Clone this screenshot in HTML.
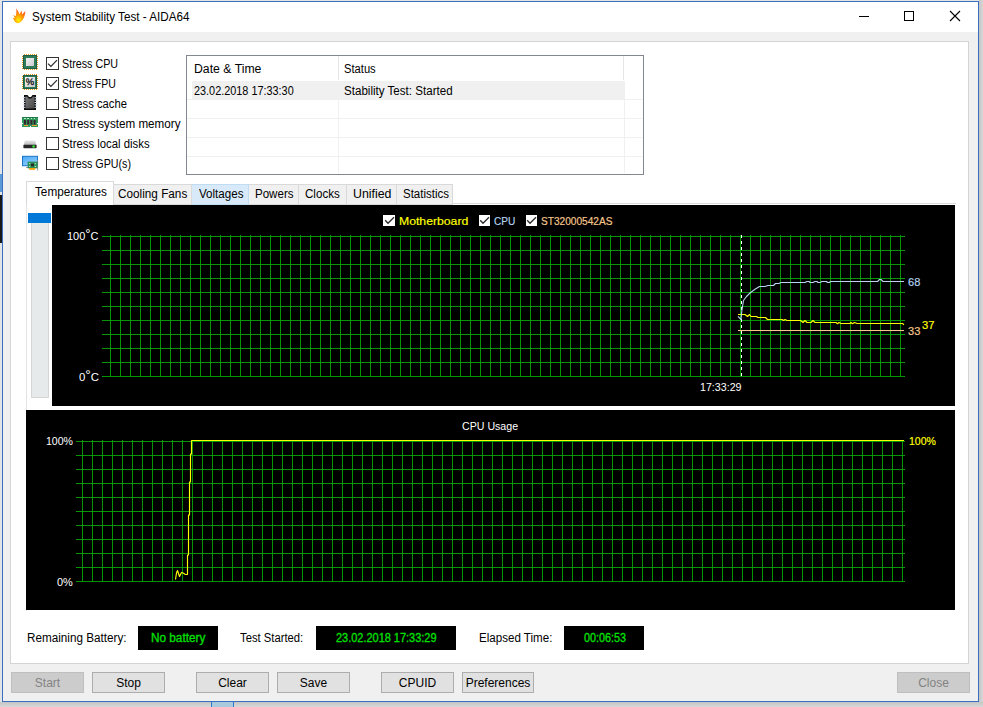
<!DOCTYPE html>
<html><head><meta charset="utf-8"><title>System Stability Test - AIDA64</title>
<style>
html,body{margin:0;padding:0;}
body{width:983px;height:707px;overflow:hidden;position:relative;background:#d6d6d6;font-family:"Liberation Sans",sans-serif;font-size:12px;color:#000;}
.a{position:absolute;}
.t{position:absolute;white-space:nowrap;line-height:14px;height:14px;transform-origin:0 0;}
#win{left:2px;top:1px;width:975px;height:699px;border:1px solid #3a6fbe;background:#f0f0f0;}
#title{left:3px;top:2px;width:975px;height:30px;background:#fff;}
#panel{left:10px;top:41px;width:957px;height:621px;border:1px solid #d4d4d4;background:#fff;}
.cb{position:absolute;width:11px;height:11px;border:1px solid #333;background:#fff;}
.btn{position:absolute;top:672px;height:19px;border:1px solid #adadad;background:#e1e1e1;text-align:center;line-height:21px;}
.btn.dis{background:#cccccc;border-color:#bfbfbf;color:#838383;}
.tab{position:absolute;top:184px;height:19px;border:1px solid #d9d9d9;border-left:none;background:#f0f0f0;}
.blk{position:absolute;background:#000;}
.dg{font-size:14px;vertical-align:1.5px;line-height:0;}
.g{color:#00e000;-webkit-text-stroke:0.3px #00e000;}
.c{font-size:11.6px;-webkit-text-stroke:0.18px currentColor;}
.w{-webkit-text-stroke:0;}
</style></head><body>
<!-- background bits behind the window -->
<div class="a" style="left:0;top:0;width:983px;height:1px;background:#e4e4e4"></div>
<div class="a" style="left:0;top:0;width:2px;height:707px;background:#e2e4e8"></div>
<div class="a" style="left:0;top:174px;width:2px;height:18px;background:#5a9ad8"></div>
<div class="a" style="left:0;top:195px;width:2px;height:48px;background:#181818"></div>
<div class="a" style="left:979px;top:0;width:4px;height:707px;background:linear-gradient(90deg,#c4c4c4,#d8d8d8)"></div>
<div class="a" style="left:0;top:702px;width:983px;height:5px;background:linear-gradient(180deg,#c4c4c4,#d8d8d8)"></div>
<div class="a" style="left:211px;top:702px;width:21px;height:5px;background:#a9c9dc;border-left:1px solid #2b7bd0;border-right:1px solid #2b7bd0"></div>

<div id="win" class="a"></div>
<div id="title" class="a"></div>
<!-- flame icon -->
<svg class="a" style="left:12px;top:7px" width="15" height="17" viewBox="0 0 15 17">
<defs><radialGradient id="fl" cx="45%" cy="80%" r="75%"><stop offset="0" stop-color="#fff200"/><stop offset="0.35" stop-color="#ffb000"/><stop offset="0.7" stop-color="#ff7a10"/><stop offset="1" stop-color="#f05a18"/></radialGradient></defs>
<path d="M4.2 1.2 C5.6 3.2 6.8 5.2 7.6 7.2 C8.2 6 8.8 4.8 9.6 3.6 C9.6 5 10 6.2 10.4 7.2 C11.4 6.2 12.4 5 13.4 4 C13.2 7 12.6 9.6 11.2 12 C10 14.2 8 16 5.6 16.2 C3.8 16 2.4 14.6 2 13 C1.8 12.2 1.4 11.6 0.8 11 C1.6 11 2.2 10.8 2.8 10.4 C2.2 9.6 1.6 9 0.8 8.6 C2 8.4 3 8.6 3.8 9 C4.4 6.4 4.6 3.8 4.2 1.2Z" fill="url(#fl)"/>
</svg>
<div class="t" id="ttl" style="left:32.1px;top:10px;transform:scaleX(0.9732)">System Stability Test - AIDA64</div>
<!-- window controls -->
<svg class="a" style="left:850px;top:2px" width="128" height="30" viewBox="0 0 128 30" shape-rendering="crispEdges">
<path d="M9 14.5H19" stroke="#000" stroke-width="1"/>
<rect x="54.5" y="9.5" width="9" height="9" fill="none" stroke="#000" stroke-width="1"/>
<path d="M100 9L110 19M110 9L100 19" stroke="#000" stroke-width="1.1" shape-rendering="auto"/>
</svg>

<div id="panel" class="a"></div>

<!-- stress icons -->
<svg width="0" height="0" style="position:absolute"><defs>
<linearGradient id="gsq" x1="0" y1="0" x2="1" y2="1"><stop offset="0" stop-color="#f4f4f4"/><stop offset="0.6" stop-color="#dcdcdc"/><stop offset="1" stop-color="#c4c4c4"/></linearGradient>
<linearGradient id="gchip" x1="0" y1="0" x2="1" y2="1"><stop offset="0" stop-color="#7a7a7a"/><stop offset="1" stop-color="#484848"/></linearGradient>
<linearGradient id="gmon" x1="0" y1="0" x2="0.6" y2="1"><stop offset="0" stop-color="#4aa6f2"/><stop offset="1" stop-color="#8fd0ff"/></linearGradient>
<linearGradient id="ghd" x1="0" y1="0" x2="0" y2="1"><stop offset="0" stop-color="#e6e6e6"/><stop offset="1" stop-color="#b8b8b8"/></linearGradient>
</defs></svg><svg class="a" style="left:22px;top:54px" width="16" height="16" viewBox="0 0 16 16" shape-rendering="crispEdges"><g fill="#e39a1c"><rect x="2" y="0" width="1" height="1"/><rect x="2" y="15" width="1" height="1"/><rect x="0" y="2" width="1" height="1"/><rect x="15" y="2" width="1" height="1"/><rect x="4" y="0" width="1" height="1"/><rect x="4" y="15" width="1" height="1"/><rect x="0" y="4" width="1" height="1"/><rect x="15" y="4" width="1" height="1"/><rect x="6" y="0" width="1" height="1"/><rect x="6" y="15" width="1" height="1"/><rect x="0" y="6" width="1" height="1"/><rect x="15" y="6" width="1" height="1"/><rect x="8" y="0" width="1" height="1"/><rect x="8" y="15" width="1" height="1"/><rect x="0" y="8" width="1" height="1"/><rect x="15" y="8" width="1" height="1"/><rect x="10" y="0" width="1" height="1"/><rect x="10" y="15" width="1" height="1"/><rect x="0" y="10" width="1" height="1"/><rect x="15" y="10" width="1" height="1"/><rect x="12" y="0" width="1" height="1"/><rect x="12" y="15" width="1" height="1"/><rect x="0" y="12" width="1" height="1"/><rect x="15" y="12" width="1" height="1"/><rect x="14" y="0" width="1" height="1"/><rect x="14" y="15" width="1" height="1"/><rect x="0" y="14" width="1" height="1"/><rect x="15" y="14" width="1" height="1"/></g>
<rect x="1" y="1" width="14" height="14" fill="#2f7a58"/><rect x="1.5" y="1.5" width="13" height="13" fill="none" stroke="#1f5e44" stroke-width="1"/>
<rect x="4" y="4" width="8" height="8" fill="url(#gsq)"/></svg><svg class="a" style="left:22px;top:74px" width="16" height="16" viewBox="0 0 16 16" shape-rendering="crispEdges"><g fill="#e39a1c"><rect x="2" y="0" width="1" height="1"/><rect x="2" y="15" width="1" height="1"/><rect x="0" y="2" width="1" height="1"/><rect x="15" y="2" width="1" height="1"/><rect x="4" y="0" width="1" height="1"/><rect x="4" y="15" width="1" height="1"/><rect x="0" y="4" width="1" height="1"/><rect x="15" y="4" width="1" height="1"/><rect x="6" y="0" width="1" height="1"/><rect x="6" y="15" width="1" height="1"/><rect x="0" y="6" width="1" height="1"/><rect x="15" y="6" width="1" height="1"/><rect x="8" y="0" width="1" height="1"/><rect x="8" y="15" width="1" height="1"/><rect x="0" y="8" width="1" height="1"/><rect x="15" y="8" width="1" height="1"/><rect x="10" y="0" width="1" height="1"/><rect x="10" y="15" width="1" height="1"/><rect x="0" y="10" width="1" height="1"/><rect x="15" y="10" width="1" height="1"/><rect x="12" y="0" width="1" height="1"/><rect x="12" y="15" width="1" height="1"/><rect x="0" y="12" width="1" height="1"/><rect x="15" y="12" width="1" height="1"/><rect x="14" y="0" width="1" height="1"/><rect x="14" y="15" width="1" height="1"/><rect x="0" y="14" width="1" height="1"/><rect x="15" y="14" width="1" height="1"/></g>
<rect x="1" y="1" width="14" height="14" fill="#2f7a58"/><rect x="1.5" y="1.5" width="13" height="13" fill="none" stroke="#1f5e44" stroke-width="1"/>
<rect x="3" y="3" width="10" height="10" fill="url(#gsq)"/>
<text x="8" y="11.4" font-family="Liberation Sans, sans-serif" font-size="9.5" text-anchor="middle" fill="#000" stroke="#000" stroke-width="0.25" style="text-rendering:geometricPrecision">%</text></svg><svg class="a" style="left:22px;top:94px" width="16" height="17" viewBox="0 0 16 17">
<path d="M2 1H5.5L7 3H9L10.5 1H14V16H2Z" fill="#0a0a0a"/>
<path d="M3.6 2.6H5L6.6 4.4H9.4L11 2.6H12.4V14.4H3.6Z" fill="url(#gchip)"/>
<g fill="#d4dcec"><rect x="0.8" y="3.2" width="2.6" height="1"/><rect x="0.8" y="5.6" width="2.6" height="1"/><rect x="0.8" y="8" width="2.6" height="1"/><rect x="0.8" y="10.4" width="2.6" height="1"/><rect x="0.8" y="12.8" width="2.6" height="1"/>
<rect x="12.6" y="3.2" width="2.6" height="1"/><rect x="12.6" y="5.6" width="2.6" height="1"/><rect x="12.6" y="8" width="2.6" height="1"/><rect x="12.6" y="10.4" width="2.6" height="1"/><rect x="12.6" y="12.8" width="2.6" height="1"/></g>
</svg><svg class="a" style="left:22px;top:117px" width="16" height="11" viewBox="0 0 16 11" shape-rendering="crispEdges">
<path d="M0 0H15.5V6H15V7H15.5V10H8.5V9H7.5V10H0V7H0.5V6H0Z" fill="#2f9a5c"/>
<rect x="0" y="0" width="15.5" height="0.6" fill="#1f7a48"/>
<g fill="#3a2430" shape-rendering="auto"><rect x="2" y="3" width="2" height="4.6"/><rect x="5.2" y="3" width="2" height="4.6"/><rect x="8.4" y="3" width="2" height="4.6"/><rect x="11.6" y="3" width="2" height="4.6"/></g>
<g fill="#bfe6c8"><rect x="2.2" y="1.3" width="1.6" height="0.9"/><rect x="5.4" y="1.3" width="1.6" height="0.9"/><rect x="8.6" y="1.3" width="1.6" height="0.9"/><rect x="11.8" y="1.3" width="1.6" height="0.9"/></g>
<g fill="#f0a030"><rect x="1.5" y="8.2" width="4.5" height="1.2"/><rect x="10" y="8.2" width="4.5" height="1.2"/></g>
</svg><svg class="a" style="left:22px;top:139px" width="16" height="12" viewBox="0 0 16 12">
<path d="M3 1.6H13L14.3 6H1.7Z" fill="url(#ghd)"/>
<rect x="1.4" y="5.8" width="13.2" height="3.4" rx="0.6" fill="#262626"/>
<rect x="1.8" y="9.2" width="12.4" height="0.8" fill="#d0d0d0" opacity="0.7"/>
<circle cx="11.6" cy="7.5" r="1.1" fill="#3cf03c"/><circle cx="11.6" cy="7.5" r="1.7" fill="#3cf03c" opacity="0.35"/>
</svg><svg class="a" style="left:22px;top:155px" width="17" height="16" viewBox="0 0 17 16">
<rect x="0.5" y="1.3" width="15" height="9.4" fill="url(#gmon)" stroke="#1b74c8" stroke-width="1"/>
<rect x="15.2" y="5" width="0.9" height="10.5" fill="#8a8f98"/>
<rect x="4" y="12" width="2.2" height="0.9" fill="#8a98a8"/>
<rect x="6" y="7" width="9.2" height="6" fill="#2f9a5c"/>
<rect x="6" y="7" width="9.2" height="6" fill="none" stroke="#1f7a48" stroke-width="0.6"/>
<rect x="9" y="8.6" width="3" height="2.8" fill="#2a2a2a"/>
<g fill="#cdeccf"><rect x="7.2" y="8" width="1" height="1"/><rect x="12.8" y="8" width="1" height="1"/><rect x="7.2" y="11" width="1" height="1"/><rect x="12.8" y="11" width="1" height="1"/></g>
<rect x="7.2" y="13" width="6" height="1.8" fill="#ffa000"/>
</svg>

<!-- checkboxes -->
<div class="cb" style="left:46px;top:57px"></div>
<div class="cb" style="left:46px;top:77px"></div>
<div class="cb" style="left:46px;top:97px"></div>
<div class="cb" style="left:46px;top:117px"></div>
<div class="cb" style="left:46px;top:137px"></div>
<div class="cb" style="left:46px;top:157px"></div>
<svg class="a" style="left:46px;top:57px" width="13" height="13" viewBox="0 0 13 13"><path d="M2 6.6L4.9 9.5L11 3.2" stroke="#2a2a2a" stroke-width="1.2" fill="none"/></svg>
<svg class="a" style="left:46px;top:77px" width="13" height="13" viewBox="0 0 13 13"><path d="M2 6.6L4.9 9.5L11 3.2" stroke="#2a2a2a" stroke-width="1.2" fill="none"/></svg>
<div class="t" id="s1" style="left:61.7px;top:57px;transform:scaleX(0.8949)">Stress CPU</div>
<div class="t" id="s2" style="left:61.7px;top:77px;transform:scaleX(0.8803)">Stress FPU</div>
<div class="t" id="s3" style="left:61.7px;top:97px;transform:scaleX(0.9355)">Stress cache</div>
<div class="t" id="s4" style="left:61.7px;top:117px;transform:scaleX(0.9712)">Stress system memory</div>
<div class="t" id="s5" style="left:61.7px;top:137px;transform:scaleX(0.9450)">Stress local disks</div>
<div class="t" id="s6" style="left:61.7px;top:157px;transform:scaleX(0.8921)">Stress GPU(s)</div>

<!-- list view -->
<div class="a" style="left:186px;top:55px;width:456px;height:118px;border:1px solid #828790;background:#fff"></div>
<div class="a" style="left:192px;top:81px;width:433px;height:19px;background:#f0f0f0"></div>
<div class="a" style="left:338px;top:56px;width:1px;height:24px;background:#e5e5e5"></div>
<div class="a" style="left:623px;top:56px;width:1px;height:24px;background:#e5e5e5"></div>
<div class="a" style="left:338px;top:100px;width:1px;height:73px;background:#f0f0f0"></div>
<div class="a" style="left:624px;top:100px;width:1px;height:73px;background:#f0f0f0"></div>
<div class="a" style="left:187px;top:99px;width:455px;height:1px;background:#f0f0f0"></div>
<div class="a" style="left:187px;top:118px;width:455px;height:1px;background:#f0f0f0"></div>
<div class="a" style="left:187px;top:137px;width:455px;height:1px;background:#f0f0f0"></div>
<div class="a" style="left:187px;top:156px;width:455px;height:1px;background:#f0f0f0"></div>
<div class="a" style="left:192px;top:81px;width:433px;height:19px;background:#f0f0f0"></div>
<div class="t" id="h1" style="left:194.1px;top:61.5px;transform:scaleX(1.0207)">Date &amp; Time</div>
<div class="t" id="h2" style="left:344.3px;top:61.5px;transform:scaleX(0.9315)">Status</div>
<div class="t" id="r1" style="left:193.5px;top:84px;transform:scaleX(0.9055)">23.02.2018 17:33:30</div>
<div class="t" id="r2" style="left:344.3px;top:84px;transform:scaleX(0.9653)">Stability Test: Started</div>

<!-- tabs -->
<div class="a" style="left:26px;top:203px;width:930px;height:1px;background:#d9d9d9"></div>
<div class="a" style="left:26px;top:203px;width:1px;height:408px;background:#e3e3e3"></div>
<div class="tab" style="left:113px;width:78px"></div>
<div class="tab" style="left:192px;width:56px;background:#d8eaf9;border-color:#c0dcf3"></div>
<div class="tab" style="left:249px;width:49px"></div>
<div class="tab" style="left:299px;width:47px"></div>
<div class="tab" style="left:347px;width:49px"></div>
<div class="tab" style="left:397px;width:55px"></div>
<div class="a" style="left:26px;top:181px;width:86px;height:23px;border:1px solid #d9d9d9;border-bottom:none;background:#fff"></div>
<div class="t" id="t1" style="left:34.5px;top:185px;transform:scaleX(0.9785)">Temperatures</div>
<div class="t" id="t2" style="left:118.2px;top:187px;transform:scaleX(0.9799)">Cooling Fans</div>
<div class="t" id="t3" style="left:198.6px;top:187px;transform:scaleX(0.9664)">Voltages</div>
<div class="t" id="t4" style="left:255.0px;top:187px;transform:scaleX(0.9621)">Powers</div>
<div class="t" id="t5" style="left:305.3px;top:187px;transform:scaleX(0.9662)">Clocks</div>
<div class="t" id="t6" style="left:352.6px;top:187px;transform:scaleX(1.0305)">Unified</div>
<div class="t" id="t7" style="left:403.0px;top:187px;transform:scaleX(0.9580)">Statistics</div>

<!-- slider -->
<div class="a" style="left:31px;top:223px;width:16px;height:173.5px;border:1px solid #d6d6d6;border-top:none;background:#e7eaea"></div>
<div class="a" style="left:28px;top:213px;width:23px;height:10px;background:#0078d7"></div>

<!-- chart 1 -->
<div class="blk" style="left:52px;top:205px;width:903px;height:201px"></div>
<svg class="a" style="left:52px;top:205px" width="903" height="201" viewBox="0 0 903 201">
<path d="M50 31.5H853M50 45.5H853M50 59.5H853M50 73.5H853M50 87.5H853M50 101.5H853M50 115.5H853M50 129.5H853M50 143.5H853M50 157.5H853M50 171.5H853M58.5 30V172M68.5 30V172M78.5 30V172M88.5 30V172M98.5 30V172M108.5 30V172M118.5 30V172M128.5 30V172M138.5 30V172M148.5 30V172M158.5 30V172M168.5 30V172M178.5 30V172M188.5 30V172M198.5 30V172M208.5 30V172M218.5 30V172M228.5 30V172M238.5 30V172M248.5 30V172M258.5 30V172M268.5 30V172M278.5 30V172M288.5 30V172M298.5 30V172M308.5 30V172M318.5 30V172M328.5 30V172M338.5 30V172M348.5 30V172M358.5 30V172M368.5 30V172M378.5 30V172M388.5 30V172M398.5 30V172M408.5 30V172M418.5 30V172M428.5 30V172M438.5 30V172M448.5 30V172M458.5 30V172M468.5 30V172M478.5 30V172M488.5 30V172M498.5 30V172M508.5 30V172M518.5 30V172M528.5 30V172M538.5 30V172M548.5 30V172M558.5 30V172M568.5 30V172M578.5 30V172M588.5 30V172M598.5 30V172M608.5 30V172M618.5 30V172M628.5 30V172M638.5 30V172M648.5 30V172M658.5 30V172M668.5 30V172M678.5 30V172M688.5 30V172M698.5 30V172M708.5 30V172M718.5 30V172M728.5 30V172M738.5 30V172M748.5 30V172M758.5 30V172M768.5 30V172M778.5 30V172M788.5 30V172M798.5 30V172M808.5 30V172M818.5 30V172M828.5 30V172M838.5 30V172M848.5 30V172" stroke="#059605" stroke-width="1" fill="none" shape-rendering="crispEdges"/>
<path d="M689.5 30V172" stroke="#fff" stroke-width="1" stroke-dasharray="3 3" shape-rendering="crispEdges"/>
<polyline points="686.0,125.5 852.0,125.5" stroke="#f8c88c" stroke-width="1.0" fill="none" stroke-linejoin="round"/>
<polyline points="686.0,109.5 693.0,109.5 695.5,111.5 697.5,109.5 699.0,111.5 704.5,111.5 706.0,112.5 713.5,112.5 715.5,114.5 730.0,114.5 731.5,115.5 733.0,114.5 735.0,115.5 748.5,115.5 751.0,117.5 753.0,115.5 755.0,117.5 759.0,117.5 761.0,115.5 763.0,117.5 784.0,117.5 785.5,118.7 787.0,117.5 789.0,118.5 798.0,118.5 799.0,117.5 800.5,118.7 802.5,117.5 805.0,118.5 850.5,118.5 852.0,119.7" stroke="#ffff00" stroke-width="1.15" fill="none" stroke-linejoin="round"/>
<polyline points="686.0,111.3 689.0,114.5 689.8,106.0 691.5,95.5 694.5,91.5 698.0,88.0 703.0,84.3 707.5,81.5 713.0,81.5 716.0,80.5 721.5,80.5 723.5,78.5 727.0,78.5 729.0,77.5 753.0,77.5 755.0,76.5 757.0,76.5 758.0,77.5 761.0,77.5 763.0,76.5 765.0,76.5 766.0,77.5 768.0,77.5 770.0,76.5 774.5,76.5 775.5,77.5 777.5,77.5 778.5,76.5 825.5,76.5 827.5,74.5 829.0,74.5 831.0,76.5 852.0,76.5" stroke="#b8d4f0" stroke-width="1.1" fill="none" stroke-linejoin="round"/>
</svg>
<div class="a" style="left:383.4px;top:214.6px;width:11.9px;height:11.7px;background:#fff"></div>
<div class="a" style="left:478.6px;top:214.6px;width:11.9px;height:11.7px;background:#fff"></div>
<div class="a" style="left:525.6px;top:214.6px;width:11.9px;height:11.7px;background:#fff"></div>
<svg class="a" style="left:384px;top:215px" width="11" height="11" viewBox="0 0 11 11"><path d="M1.2 5.3L4 8.2L10 2.2" stroke="#2a2a2a" stroke-width="1.3" fill="none"/></svg>
<svg class="a" style="left:479px;top:215px" width="11" height="11" viewBox="0 0 11 11"><path d="M1.2 5.3L4 8.2L10 2.2" stroke="#2a2a2a" stroke-width="1.3" fill="none"/></svg>
<svg class="a" style="left:526px;top:215px" width="11" height="11" viewBox="0 0 11 11"><path d="M1.2 5.3L4 8.2L10 2.2" stroke="#2a2a2a" stroke-width="1.3" fill="none"/></svg>
<div class="t c" id="l1" style="left:399.1px;top:213.5px;transform:scaleX(1.0540);color:#ffff00">Motherboard</div>
<div class="t c" id="l2" style="left:493.9px;top:213.5px;transform:scaleX(0.8699);color:#b4d2f0">CPU</div>
<div class="t c" id="l3" style="left:541.0px;top:213.5px;transform:scaleX(0.8733);color:#f8c88c">ST32000542AS</div>
<div class="t c w" id="y1" style="left:67.2px;top:229px;transform:scaleX(0.9451);color:#fff">100<span class="dg">°</span>C</div>
<div class="t c w" id="y0" style="left:78.6px;top:370px;transform:scaleX(0.9835);color:#fff">0<span class="dg">°</span>C</div>
<div class="t c w" id="tm" style="left:700.0px;top:380px;transform:scaleX(0.9193);color:#fff">17:33:29</div>
<div class="t c" id="v68" style="left:908.0px;top:275px;transform:scaleX(0.9530);color:#b4d2f0">68</div>
<div class="t c" id="v33" style="left:908.0px;top:324px;transform:scaleX(0.9530);color:#f8c88c">33</div>
<div class="t c" id="v37" style="left:922.2px;top:318px;transform:scaleX(0.9685);color:#ffff00">37</div>

<!-- chart 2 -->
<div class="blk" style="left:26px;top:410px;width:929px;height:200px"></div>
<svg class="a" style="left:26px;top:410px" width="929" height="200" viewBox="0 0 929 200">
<path d="M50 31.5H879M50 45.5H879M50 59.5H879M50 73.5H879M50 87.5H879M50 101.5H879M50 115.5H879M50 129.5H879M50 143.5H879M50 157.5H879M50 171.5H879M56.5 30V172M66.5 30V172M76.5 30V172M86.5 30V172M96.5 30V172M106.5 30V172M116.5 30V172M126.5 30V172M136.5 30V172M146.5 30V172M156.5 30V172M166.5 30V172M176.5 30V172M186.5 30V172M196.5 30V172M206.5 30V172M216.5 30V172M226.5 30V172M236.5 30V172M246.5 30V172M256.5 30V172M266.5 30V172M276.5 30V172M286.5 30V172M296.5 30V172M306.5 30V172M316.5 30V172M326.5 30V172M336.5 30V172M346.5 30V172M356.5 30V172M366.5 30V172M376.5 30V172M386.5 30V172M396.5 30V172M406.5 30V172M416.5 30V172M426.5 30V172M436.5 30V172M446.5 30V172M456.5 30V172M466.5 30V172M476.5 30V172M486.5 30V172M496.5 30V172M506.5 30V172M516.5 30V172M526.5 30V172M536.5 30V172M546.5 30V172M556.5 30V172M566.5 30V172M576.5 30V172M586.5 30V172M596.5 30V172M606.5 30V172M616.5 30V172M626.5 30V172M636.5 30V172M646.5 30V172M656.5 30V172M666.5 30V172M676.5 30V172M686.5 30V172M696.5 30V172M706.5 30V172M716.5 30V172M726.5 30V172M736.5 30V172M746.5 30V172M756.5 30V172M766.5 30V172M776.5 30V172M786.5 30V172M796.5 30V172M806.5 30V172M816.5 30V172M826.5 30V172M836.5 30V172M846.5 30V172M856.5 30V172M866.5 30V172M876.5 30V172" stroke="#059605" stroke-width="1" fill="none" shape-rendering="crispEdges"/>
<polyline points="149.5,169.5 150.5,163.0 151.5,160.5 153.5,166.5 155.5,162.5 157.0,163.0 159.5,164.5 161.5,164.5 161.5,145.0 162.5,145.0 162.5,105.0 163.5,105.0 163.5,72.0 164.5,72.0 164.5,44.0 165.5,44.0 165.5,30.5 878.0,30.5" stroke="#ffff00" stroke-width="1.15" fill="none" stroke-linejoin="round"/>
</svg>
<div class="t c w" id="cu" style="left:462.2px;top:419px;transform:scaleX(0.9164);color:#fff">CPU Usage</div>
<div class="t c w" id="p100" style="left:45.5px;top:434px;transform:scaleX(0.9104);color:#fff">100%</div>
<div class="t c w" id="p0" style="left:56.7px;top:575px;transform:scaleX(0.9424);color:#fff">0%</div>
<div class="t c" id="p100r" style="left:908.6px;top:434px;transform:scaleX(0.9071);color:#ffff00">100%</div>

<!-- status row -->
<div class="t" id="b1" style="left:26.6px;top:631px;transform:scaleX(0.9760)">Remaining Battery:</div>
<div class="blk" style="left:138px;top:626px;width:80px;height:24px"></div>
<div class="t g" id="b2" style="left:151.0px;top:630.5px;transform:scaleX(0.9809)">No battery</div>
<div class="t" id="b3" style="left:240.3px;top:631px;transform:scaleX(0.9380)">Test Started:</div>
<div class="blk" style="left:316px;top:626px;width:140px;height:24px"></div>
<div class="t g" id="b4" style="left:335.5px;top:630.5px;transform:scaleX(0.9127)">23.02.2018 17:33:29</div>
<div class="t" id="b5" style="left:479.1px;top:631px;transform:scaleX(0.9652)">Elapsed Time:</div>
<div class="blk" style="left:564px;top:626px;width:80px;height:24px"></div>
<div class="t g" id="b6" style="left:583.5px;top:630.5px;transform:scaleX(0.8990)">00:06:53</div>

<!-- buttons -->
<div class="btn dis" style="left:11px;width:71px"><span id="k1">Start</span></div>
<div class="btn" style="left:92px;width:71px"><span id="k2">Stop</span></div>
<div class="btn" style="left:196px;width:71px"><span id="k3">Clear</span></div>
<div class="btn" style="left:277px;width:71px"><span id="k4">Save</span></div>
<div class="btn" style="left:381px;width:71px"><span id="k5">CPUID</span></div>
<div class="btn" style="left:462px;width:70px"><span id="k6">Preferences</span></div>
<div class="btn dis" style="left:897px;width:71px"><span id="k7">Close</span></div>
</body></html>
